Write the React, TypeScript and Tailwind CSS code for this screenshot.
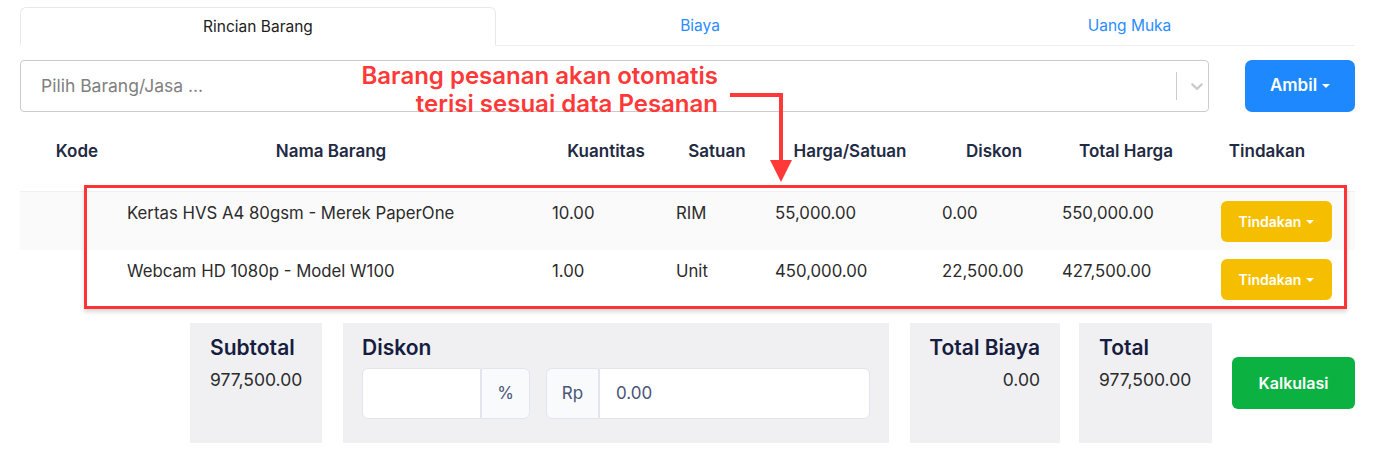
import React from "react";

const rows = [
  { nama: "Kertas HVS A4 80gsm - Merek PaperOne", qty: "10.00", satuan: "RIM", harga: "55,000.00", diskon: "0.00", total: "550,000.00" },
  { nama: "Webcam HD 1080p - Model W100", qty: "1.00", satuan: "Unit", harga: "450,000.00", diskon: "22,500.00", total: "427,500.00" },
];

const cols = "grid grid-cols-[97px_428px_122px_100px_166px_122px_142px_140px_1fr]";

function Caret() {
  return <span className="inline-block ml-[5px] align-middle border-x-[4px] border-x-transparent border-t-[4px] border-t-white" />;
}

function Chevron() {
  return (
    <svg viewBox="0 0 20 20" className="w-5 h-5 fill-[#cccccc]">
      <path d="M4.516 7.548c0.436-0.446 1.043-0.481 1.576 0l3.908 3.747 3.908-3.747c0.533-0.481 1.141-0.446 1.574 0 0.436 0.445 0.408 1.197 0 1.615-0.406 0.418-4.695 4.502-4.695 4.502-0.217 0.223-0.502 0.335-0.787 0.335s-0.57-0.112-0.789-0.335c0 0-4.287-4.084-4.695-4.502s-0.436-1.17 0-1.615z" />
    </svg>
  );
}

export default function App() {
  return (
    <div className="relative w-full h-[454px] bg-white font-['Inter',sans-serif] overflow-hidden">
      <div className="pl-[20px] pr-[30px] pt-[7px]">
        {/* tabs */}
        <div className="flex h-[39px] border-b border-[#eceef1]">
          <div className="w-[476px] -mb-px border border-[#e6e8ec] border-b-white rounded-t-[6px] bg-white flex items-center justify-center text-[15.5px] text-[#1c1c1c]">
            Rincian Barang
          </div>
          <div className="w-[408px] flex items-center justify-center text-[15.5px] text-[#2a8cff]">Biaya</div>
          <div className="flex-1 flex items-center justify-center text-[15.5px] text-[#2a8cff]">Uang Muka</div>
        </div>

        {/* select */}
        <div className="flex mt-[14px] gap-[36px]">
          <div className="w-[1189px] h-[52px] border border-[#cccccc] rounded-[4px] flex items-center">
            <span className="flex-1 pl-[20px] text-[17.5px] text-[#808080]">Pilih Barang/Jasa ...</span>
            <span className="w-px h-[28px] bg-[#cccccc]" />
            <span className="pl-[10px] pr-px"><Chevron /></span>
          </div>
          <button className="flex-1 h-[52px] rounded-[7px] bg-[#1e88ff] text-white font-semibold text-[17px] flex items-center justify-center">
            Ambil<Caret />
          </button>
        </div>

        {/* table */}
        <div className={`${cols} h-[80px] items-center border-b border-[#eef0f2] text-[17px] font-semibold text-[#1f2a44]`}>
          <div className="text-center pl-[17px]">Kode</div>
          <div className="text-center">Nama Barang</div>
          <div className="text-center">Kuantitas</div>
          <div className="text-center">Satuan</div>
          <div className="text-center">Harga/Satuan</div>
          <div className="text-center">Diskon</div>
          <div className="text-center">Total Harga</div>
          <div className="text-center">Tindakan</div>
          <div />
        </div>
        {rows.map((r, i) => (
          <div key={i} className={`${cols} h-[58px] pt-[9px] text-[16.75px] leading-[24px] text-[#2b2b2b] ${i === 0 ? "bg-[#fafafa]" : "bg-white"}`}>
            <div />
            <div className="pl-[10px]">{r.nama}</div>
            <div className="pl-[7px]">{r.qty}</div>
            <div className="pl-[9px]">{r.satuan}</div>
            <div className="pl-[8px]">{r.harga}</div>
            <div className="pl-[9px]">{r.diskon}</div>
            <div className="pl-[7px]">{r.total}</div>
            <div className="pl-[24px]">
              <button className="w-[111px] h-[41px] rounded-[6px] bg-[#f5bf00] text-white font-semibold text-[14px] flex items-center justify-center">
                Tindakan<Caret />
              </button>
            </div>
            <div />
          </div>
        ))}

        {/* summary */}
        <div className="flex items-center mt-[15px] ml-[170px] h-[120px]">
          <div className="w-[132px] h-full bg-[#f0f0f3] pl-[20px] pt-[11px]">
            <div className="text-[21px] leading-[28px] font-semibold text-[#161d3f]">Subtotal</div>
            <div className="mt-[5px] text-[17.5px] text-[#2b2b2b]">977,500.00</div>
          </div>
          <div className="ml-[21px] w-[546px] h-full bg-[#f0f0f3] pl-[19px] pt-[11px]">
            <div className="text-[21px] leading-[28px] font-semibold text-[#161d3f]">Diskon</div>
            <div className="flex mt-[6px] h-[51px]">
              <div className="w-[119px] bg-white border border-[#e2e5f0] rounded-l-[6px]" />
              <div className="w-[49px] bg-[#f9fafb] border border-[#e2e5f0] rounded-r-[6px] flex items-center justify-center text-[17px] text-[#4a5578]">%</div>
              <div className="ml-[16px] w-[53px] bg-[#f9fafb] border border-[#e2e5f0] rounded-l-[6px] flex items-center justify-center text-[17px] text-[#4a5578]">Rp</div>
              <div className="w-[271px] bg-white border border-[#e2e5f0] rounded-r-[6px] flex items-center pl-[16px] text-[17px] text-[#4a5578]">0.00</div>
            </div>
          </div>
          <div className="ml-[21px] w-[150px] h-full bg-[#f0f0f3] pr-[20px] pt-[11px] text-right">
            <div className="text-[21px] leading-[28px] font-semibold text-[#161d3f]">Total Biaya</div>
            <div className="mt-[5px] text-[17.5px] text-[#2b2b2b]">0.00</div>
          </div>
          <div className="ml-[19px] w-[133px] h-full bg-[#f0f0f3] pl-[20px] pt-[11px]">
            <div className="text-[21px] leading-[28px] font-semibold text-[#161d3f]">Total</div>
            <div className="mt-[5px] text-[17.5px] text-[#2b2b2b]">977,500.00</div>
          </div>
          <button className="ml-[20px] w-[123px] h-[52px] rounded-[6px] bg-[#0bb241] text-white font-semibold text-[16px]">
            Kalkulasi
          </button>
        </div>
      </div>

      {/* annotation overlay */}
      <div className="absolute left-[300px] w-[418px] top-[62px] text-right text-[24px] leading-[28px] font-semibold text-[#ff3838]">
        Barang pesanan akan otomatis
        <br />
        terisi sesuai data Pesanan
      </div>
      <svg className="absolute left-0 top-0 pointer-events-none" width="1385" height="454">
        <path d="M730 95 H781 V162" stroke="#ff3838" strokeWidth="4" fill="none" />
        <polygon points="770,160 792,160 781,182" fill="#ff3838" />
      </svg>
      <div className="absolute left-[84px] top-[185px] w-[1263px] h-[124px] border-[3px] border-[#ff3333] shadow-[0_3px_4px_rgba(0,0,0,0.15)]" />
    </div>
  );
}
